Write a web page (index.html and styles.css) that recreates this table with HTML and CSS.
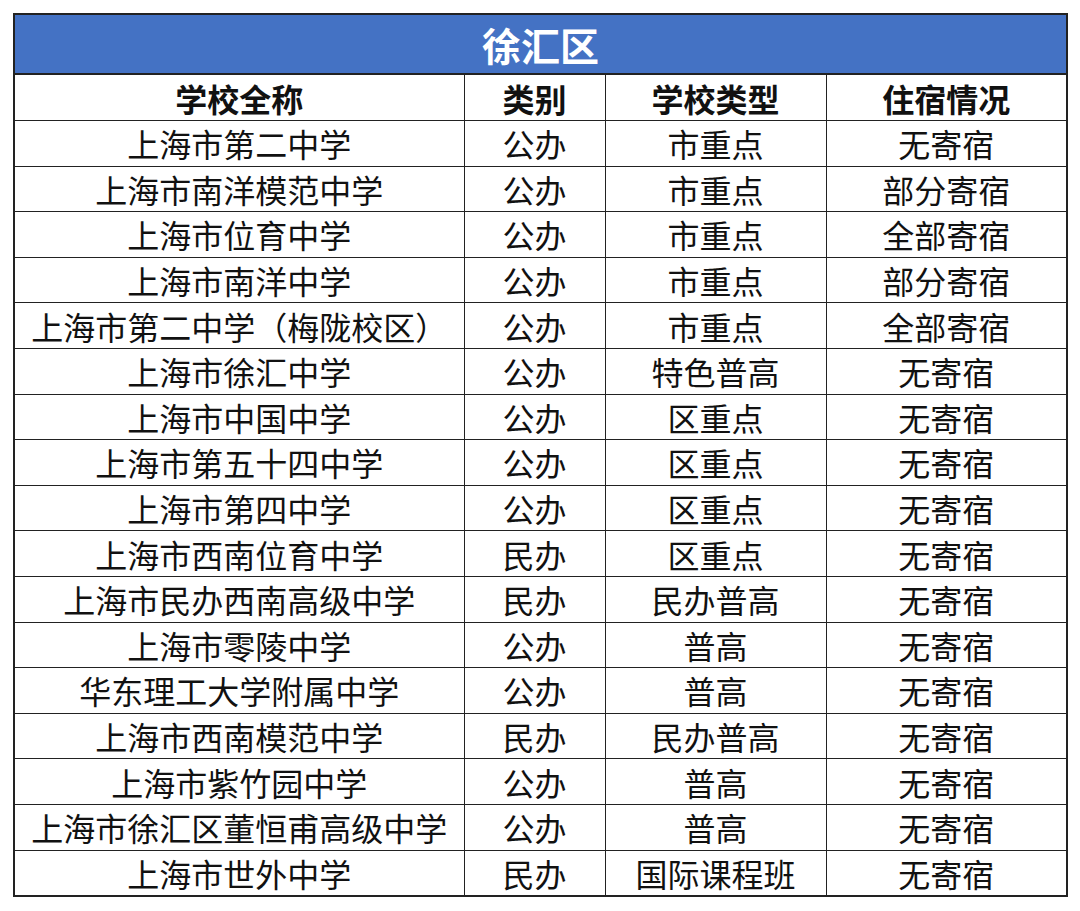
FILE: index.html
```html
<!DOCTYPE html>
<html lang="zh">
<head>
<meta charset="utf-8">
<title>徐汇区</title>
<link rel="stylesheet" href="styles.css">
</head>
<body>
<table class="sheet">
  <colgroup>
    <col class="c-name"><col class="c-kind"><col class="c-type"><col class="c-stay">
  </colgroup>
  <thead>
    <tr class="title-row"><th colspan="4">徐汇区</th></tr>
    <tr class="head-row"><th>学校全称</th><th>类别</th><th>学校类型</th><th>住宿情况</th></tr>
  </thead>
  <tbody>
    <tr><td>上海市第二中学</td><td>公办</td><td>市重点</td><td>无寄宿</td></tr>
    <tr><td>上海市南洋模范中学</td><td>公办</td><td>市重点</td><td>部分寄宿</td></tr>
    <tr><td>上海市位育中学</td><td>公办</td><td>市重点</td><td>全部寄宿</td></tr>
    <tr><td>上海市南洋中学</td><td>公办</td><td>市重点</td><td>部分寄宿</td></tr>
    <tr><td>上海市第二中学（梅陇校区）</td><td>公办</td><td>市重点</td><td>全部寄宿</td></tr>
    <tr><td>上海市徐汇中学</td><td>公办</td><td>特色普高</td><td>无寄宿</td></tr>
    <tr><td>上海市中国中学</td><td>公办</td><td>区重点</td><td>无寄宿</td></tr>
    <tr><td>上海市第五十四中学</td><td>公办</td><td>区重点</td><td>无寄宿</td></tr>
    <tr><td>上海市第四中学</td><td>公办</td><td>区重点</td><td>无寄宿</td></tr>
    <tr><td>上海市西南位育中学</td><td>民办</td><td>区重点</td><td>无寄宿</td></tr>
    <tr><td>上海市民办西南高级中学</td><td>民办</td><td>民办普高</td><td>无寄宿</td></tr>
    <tr><td>上海市零陵中学</td><td>公办</td><td>普高</td><td>无寄宿</td></tr>
    <tr><td>华东理工大学附属中学</td><td>公办</td><td>普高</td><td>无寄宿</td></tr>
    <tr><td>上海市西南模范中学</td><td>民办</td><td>民办普高</td><td>无寄宿</td></tr>
    <tr><td>上海市紫竹园中学</td><td>公办</td><td>普高</td><td>无寄宿</td></tr>
    <tr><td>上海市徐汇区董恒甫高级中学</td><td>公办</td><td>普高</td><td>无寄宿</td></tr>
    <tr><td>上海市世外中学</td><td>民办</td><td>国际课程班</td><td>无寄宿</td></tr>
  </tbody>
</table>
</body>
</html>
```

FILE: styles.css
```css
html, body {
  margin: 0;
  padding: 0;
  background: #ffffff;
}

body {
  padding: 13px 0 0 13px;
  font-family: "Noto Sans CJK SC", "Noto Sans", sans-serif;
  color: #111111;
}

.sheet {
  border-collapse: collapse;
  table-layout: fixed;
  width: 1053px;
  border: 2px solid #222222;
}

.c-name { width: 450px; }
.c-kind { width: 141px; }
.c-type { width: 221px; }
.c-stay { width: 241px; }

.sheet th,
.sheet td {
  border: 1.5px solid #222222;
  padding: 0;
  text-align: center;
  vertical-align: middle;
  font-size: 32px;
  line-height: 1;
  white-space: nowrap;
  overflow: hidden;
}

.sheet td {
  font-weight: 400;
  height: 44.6px;
}

.title-row th {
  background: #4472c4;
  color: #ffffff;
  font-size: 39px;
  font-weight: 700;
  height: 58px;
  border-bottom: 2px solid #222222;
}

.head-row th {
  font-weight: 700;
  height: 45px;
  color: #111111;
}
```
